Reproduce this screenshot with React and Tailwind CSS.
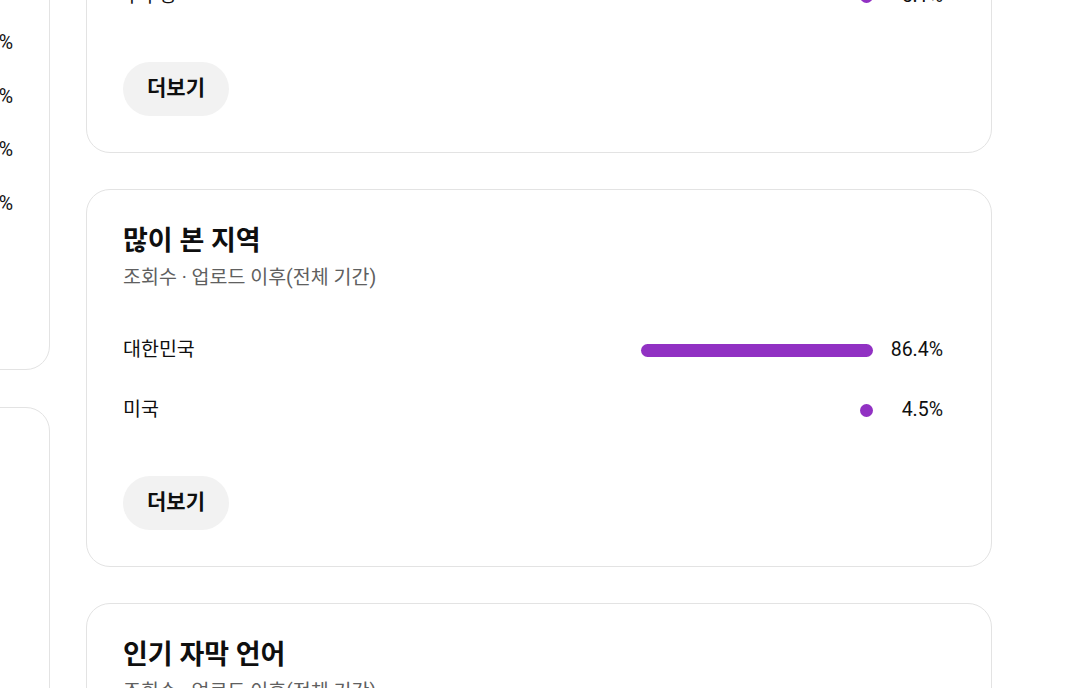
const topRows = [{ label: "우주항", pct: 5.1 }];
const regionRows = [
    { label: "대한민국", pct: 86.4 },
    { label: "미국", pct: 4.5 },
];
const leftRows = ["3.2", "2.8", "1.9", "1.1"];

function Bar({ pct, max }) {
    const w = Math.max(13, (pct / max) * 232);
    return (
        <div className="w-[232px] flex justify-end">
            <div className="h-[13px] rounded-full bg-[#9131c3]" style={{ width: `${w}px` }} />
        </div>
    );
}

function Row({ label, pct, max }) {
    return (
        <div className="h-[60px] flex items-center pr-3 text-[19.5px]">
            <span className="flex-1">{label}</span>
            <Bar pct={pct} max={max} />
            <span className="w-[70px] text-right">{pct}%</span>
        </div>
    );
}

function MoreButton() {
    return (
        <button className="h-[54px] px-6 rounded-full bg-[#f2f2f2] text-[21px] font-bold text-[#0f0f0f]">
            더보기
        </button>
    );
}

function Card({ title, children }) {
    return (
        <div className="rounded-[24px] border border-[#e3e3e3] bg-white px-9 pt-[35px] pb-[36px]">
            <h2 className="text-[27px] leading-8 font-bold text-[#0f0f0f]">{title}</h2>
            <p className="mt-[9px] leading-6 text-[19.5px] text-[#606060]">
                조회수 · 업로드 이후(전체 기간)
            </p>
            <div className="mt-[30px]">{children}</div>
            <div className="mt-9">
                <MoreButton />
            </div>
        </div>
    );
}

export default function App() {
    return (
        <div
            className="h-[688px] overflow-hidden bg-white text-[#0f0f0f]"
            style={{ fontFamily: "Roboto, 'Noto Sans CJK KR', sans-serif" }}
        >
            <div className="flex gap-9 -ml-[250px] -mt-[165px]">
                <div className="w-[300px] shrink-0 flex flex-col gap-[37px]">
                    <div className="rounded-[24px] border border-[#e3e3e3] px-9 pt-[35px] pb-[36px]">
                        <h2 className="text-[27px] leading-8 font-bold">많이 본 연령대</h2>
                        <p className="mt-[9px] leading-6 text-[19.5px] text-[#606060]">조회수</p>
                        <div className="mt-[80px]">
                            {leftRows.map((p) => (
                                <div key={p} className="h-[53.5px] flex items-center justify-end text-[19.5px]">
                                    {p}%
                                </div>
                            ))}
                        </div>
                        <div className="mt-[49px]">
                            <MoreButton />
                        </div>
                    </div>
                    <div className="rounded-[24px] border border-[#e3e3e3] h-[400px]" />
                </div>
                <div className="w-[906px] shrink-0 flex flex-col gap-[36px]">
                    <Card title="많이 본 트래픽 소스">
                        {topRows.map((r) => (
                            <Row key={r.label} {...r} max={100} />
                        ))}
                    </Card>
                    <Card title="많이 본 지역">
                        {regionRows.map((r) => (
                            <Row key={r.label} {...r} max={86.4} />
                        ))}
                    </Card>
                    <Card title="인기 자막 언어">
                        <Row label="한국어" pct={92.1} max={92.1} />
                    </Card>
                </div>
            </div>
        </div>
    );
}
